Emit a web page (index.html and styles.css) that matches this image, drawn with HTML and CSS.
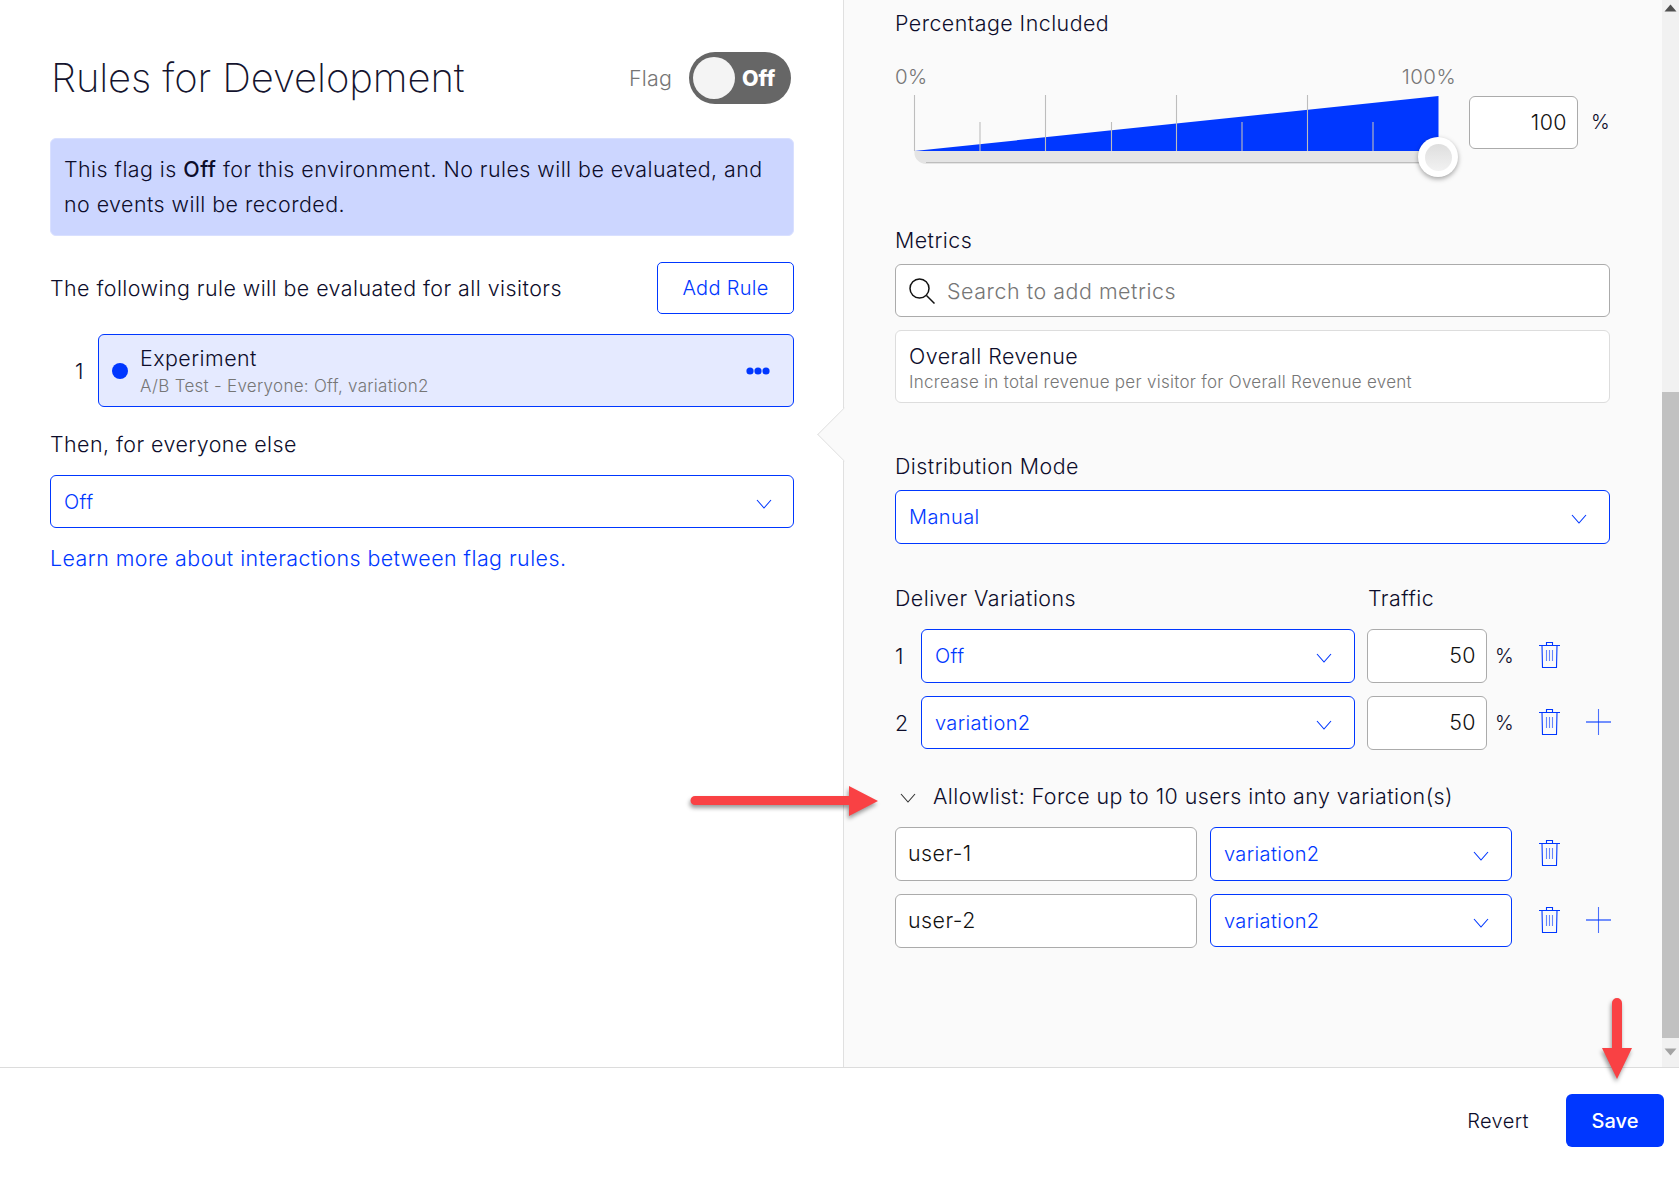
FILE: index.html
```html
<!DOCTYPE html>
<html lang="en">
<head>
<meta charset="utf-8">
<title>Rules for Development</title>
<link rel="stylesheet" href="styles.css">
</head>
<body>
<svg class="defs" width="0" height="0" aria-hidden="true">
  <symbol id="chev" viewBox="0 0 16 10"><path d="M1 1l7 8 7-8" fill="none" stroke="currentColor" stroke-width="1.1"/></symbol>
  <symbol id="trash" viewBox="0 0 21 26">
    <path d="M7.5 3V.5h6V3M0 3.5h21M3 3.5l.5 22h14l.5-22" fill="none" stroke="currentColor" stroke-width="1.1"/>
    <path d="M7.5 8v11M10.5 8v11M13.5 8v11" fill="none" stroke="currentColor" stroke-width="1.1" opacity=".6"/>
  </symbol>
  <symbol id="plus" viewBox="0 0 25 26">
    <path d="M0 13h25" stroke="currentColor" stroke-width="1.1"/>
    <path d="M12.5 0v26" stroke="currentColor" stroke-width="1.1" opacity=".7"/>
  </symbol>
</svg>
<div class="app">
  <div class="main">
    <section class="left">
      <header class="head">
        <h1 class="title">Rules for Development</h1>
        <div class="flag">
          <span class="flag-label">Flag</span>
          <div class="toggle"><span class="knob"></span><span class="toggle-text">Off</span></div>
        </div>
      </header>
      <div class="banner">This flag is <b class="strong">Off</b> for this environment. No rules will be evaluated, and no events will be recorded.</div>
      <div class="rule-head">
        <span>The following rule will be evaluated for all visitors</span>
        <button class="btn-outline">Add Rule</button>
      </div>
      <div class="rule-row">
        <span class="rule-num">1</span>
        <div class="rule-card">
          <span class="dot"></span>
          <div class="rule-body">
            <div class="rule-title">Experiment</div>
            <div class="rule-sub">A/B Test - Everyone: Off, variation2</div>
          </div>
          <svg class="more" viewBox="0 0 24 8" width="24" height="8"><circle cx="4" cy="4" r="3.6"/><circle cx="12" cy="4" r="3.6"/><circle cx="20" cy="4" r="3.6"/></svg>
        </div>
      </div>
      <div class="label then">Then, for everyone else</div>
      <div class="select select-full"><span>Off</span><svg class="chev"><use href="#chev"/></svg></div>
      <a class="link" href="#">Learn more about interactions between flag rules.</a>
    </section>

    <section class="panel">
      <div class="notch"></div>
      <div class="label first">Percentage Included</div>
      <div class="slider-row">
        <div class="slider">
          <div class="scale"><span>0%</span><span>100%</span></div>
          <svg class="ramp" width="574" height="90" viewBox="0 0 574 90">
            <path d="M19.4 59H543.5V72H31a11.6 11.6 0 0 1-11.600-11.600z" fill="#e4e4e4"/>
            <path d="M31 70.500H543" stroke="#bdbdbd" stroke-width="1" fill="none"/>
            <path d="M19.4 59L543.500 4V59z" fill="#0037ff"/>
            <g stroke="#bdbdbd" stroke-width="1.100">
              <path d="M19.500 3V59M150.500 3V59M281.500 3V59M412.500 3V59"/>
              <path d="M85 30V59M216.500 30V59M347 30V59M478 30V59"/>
            </g>
          </svg>
          <div class="thumb"><span class="thumb-in"></span></div>
        </div>
        <div class="pct-input">100</div>
        <span class="pct-sign">%</span>
      </div>

      <div class="label metrics">Metrics</div>
      <div class="search">
        <svg class="search-ico" width="26" height="26" viewBox="0 0 26 26"><circle cx="10.500" cy="10.500" r="9.500" fill="none" stroke="#111" stroke-width="1.500"/><path d="M17.500 17.500L25.500 25.500" stroke="#111" stroke-width="1.500"/></svg>
        <span>Search to add metrics</span>
      </div>
      <div class="metric">
        <div class="rule-title">Overall Revenue</div>
        <div class="rule-sub">Increase in total revenue per visitor for Overall Revenue event</div>
      </div>

      <div class="label dist">Distribution Mode</div>
      <div class="select select-panel"><span>Manual</span><svg class="chev"><use href="#chev"/></svg></div>

      <div class="var-head"><span class="var-head-name">Deliver Variations</span><span>Traffic</span></div>
      <div class="var-row first-row">
        <span class="var-num">1</span>
        <div class="select select-var"><span>Off</span><svg class="chev"><use href="#chev"/></svg></div>
        <div class="num-input">50</div>
        <span class="var-pct">%</span>
        <svg class="ico-trash"><use href="#trash"/></svg>
      </div>
      <div class="var-row next-row">
        <span class="var-num">2</span>
        <div class="select select-var"><span>variation2</span><svg class="chev"><use href="#chev"/></svg></div>
        <div class="num-input">50</div>
        <span class="var-pct">%</span>
        <svg class="ico-trash"><use href="#trash"/></svg>
        <svg class="ico-plus"><use href="#plus"/></svg>
      </div>

      <div class="allow-head"><svg class="chev chev-dark"><use href="#chev"/></svg><span>Allowlist: Force up to 10 users into any variation(s)</span></div>
      <div class="allow-row first-row">
        <div class="text-input">user-1</div>
        <div class="select select-allow"><span>variation2</span><svg class="chev"><use href="#chev"/></svg></div>
        <svg class="ico-trash allow-trash"><use href="#trash"/></svg>
      </div>
      <div class="allow-row next-row">
        <div class="text-input">user-2</div>
        <div class="select select-allow"><span>variation2</span><svg class="chev"><use href="#chev"/></svg></div>
        <svg class="ico-trash allow-trash"><use href="#trash"/></svg>
        <svg class="ico-plus"><use href="#plus"/></svg>
      </div>
    </section>

    <div class="scrollbar">
      <svg class="sb-arrow" width="17" height="17" viewBox="0 0 17 17"><path d="M2.500 11.500L8.500 4.500l6 7z" fill="#505050"/></svg>
      <div class="sb-gap"></div>
      <div class="sb-thumb"></div>
      <svg class="sb-arrow sb-arrow-down" width="17" height="17" viewBox="0 0 17 17"><path d="M2.500 5.500L8.500 12.500l6-7z" fill="#a3a3a3"/></svg>
    </div>
  </div>

  <footer class="footer">
    <button class="btn-text">Revert</button>
    <button class="btn-primary">Save</button>
  </footer>

  <svg class="arrow arrow-right" width="190" height="32" viewBox="0 0 190 32">
    <path d="M5 11H159V1L188 16 159 31V20H5a4.500 4.500 0 0 1 0-9z" fill="#f94144"/>
  </svg>
  <svg class="arrow arrow-down" width="32" height="82" viewBox="0 0 32 82">
    <path d="M11 5a5 5 0 0 1 10 0V50H31L16 81 1 50H11z" fill="#f94144"/>
  </svg>
</div>
</body>
</html>
```
FILE: styles.css
```css
* { box-sizing: border-box; }
html, body { margin: 0; height: 100%; }
body {
  font-family: Inter, "Liberation Sans", sans-serif;
  font-size: 21.4px;
  font-weight: 350;
  letter-spacing: .46px;
  line-height: 30px;
  color: #0d0d2b;
  background: #fff;
  overflow: hidden;
}
.defs { position: absolute; }
.app { position: relative; display: flex; flex-direction: column; height: 1179px; }
.main { display: flex; height: 1067px; }

/* left */
.left { width: 843px; flex: none; padding: 52px 49px 0 50px; }
.head { display: flex; justify-content: space-between; align-items: center; height: 52px; }
.title { margin: 0; font-size: 40px; font-weight: 200; letter-spacing: -.1px; line-height: 52px; padding-left: 1px; color: #14142e; }
.flag { display: flex; align-items: center; gap: 17px; margin-right: 3px; }
.flag-label { color: #767676; font-size: 21.4px; letter-spacing: .2px; }
.toggle { width: 102px; height: 52px; border-radius: 26px; background: #666; display: flex; align-items: center; padding-left: 4px; }
.knob { width: 42px; height: 42px; border-radius: 50%; background: #f4f4f4; flex: none; }
.toggle-text { color: #fff; font-weight: 800; font-size: 21.4px; letter-spacing: 0; margin-left: 7px; }
.banner { margin-top: 34px; height: 98px; padding: 13px 13px; line-height: 35px; background: #ccd6ff; border: 1px solid #d9e0ff; border-radius: 6px; }
.strong { font-weight: 500; }
.rule-head { margin-top: 26px; height: 52px; display: flex; justify-content: space-between; align-items: center; }
.btn-outline { width: 137px; height: 52px; font: inherit; font-size: 20px; letter-spacing: .3px; color: #0037ff; background: #fff; border: 1px solid #0037ff; border-radius: 5px; padding: 0; }
.rule-row { margin-top: 20px; display: flex; align-items: center; }
.rule-num { width: 48px; padding-left: 25px; flex: none; }
.rule-card { flex: 1; height: 73px; background: #e5eaff; border: 1px solid #0037ff; border-radius: 6px; display: flex; align-items: center; padding: 0 23px 0 13px; }
.dot { width: 16px; height: 16px; border-radius: 50%; background: #0037ff; flex: none; }
.rule-body { flex: 1; margin-left: 12px; }
.rule-title { line-height: 28px; }
.rule-sub { font-size: 17px; letter-spacing: .28px; line-height: 24px; color: #767676; padding-top: 2px; }
.more { fill: #0037ff; flex: none; }
.label { line-height: 30px; }
.then { margin-top: 22px; }
.select { display: flex; align-items: center; justify-content: space-between; background: #fff; border: 1px solid #0037ff; border-radius: 6px; color: #0037ff; font-size: 20px; letter-spacing: .4px; }
.chev { width: 16px; height: 10px; flex: none; color: #0037ff; margin-top: 4px; }
.select-full { margin-top: 16px; height: 53px; padding: 0 21px 0 13px; }
.link { display: block; margin-top: 15px; color: #0037ff; text-decoration: none; }

/* panel */
.panel { position: relative; flex: 1; background: #fafafa; border-left: 1px solid #e0e0e0; padding: 9px 0 0 51px; min-width: 0; }
.notch { position: absolute; left: -19px; top: 415px; width: 39px; height: 39px; background: #fafafa; border-left: 1px solid #e0e0e0; border-bottom: 1px solid #e0e0e0; transform: rotate(45deg); clip-path: polygon(0 0, 100% 100%, 0 100%); }
.first { margin-top: -1px; }
.slider-row { display: flex; margin-top: 24px; align-items: flex-start; }
.slider { position: relative; width: 574px; flex: none; }
.scale { width: 561px; display: flex; justify-content: space-between; color: #767676; font-size: 20.5px; letter-spacing: .4px; }
.ramp { display: block; }
.thumb { position: absolute; left: 523px; top: 75px; width: 40px; height: 40px; border-radius: 50%; background: #fff; box-shadow: 0 2px 5px rgba(0, 0, 0, .35); display: flex; align-items: center; justify-content: center; }
.thumb-in { width: 27px; height: 27px; border-radius: 50%; background: linear-gradient(#dedede, #f2f2f2); }
.pct-input { width: 109px; height: 53px; margin-top: 34px; background: #fff; border: 1px solid #ababab; border-radius: 6px; text-align: right; padding-right: 10px; line-height: 51px; color: #111; }
.pct-sign { margin: 45px 0 0 13px; font-size: 20px; letter-spacing: 0; }
.metrics { margin-top: 43px; }
.search { margin-top: 9px; width: 715px; height: 53px; background: #fff; border: 1px solid #ababab; border-radius: 6px; display: flex; align-items: center; padding-left: 13px; color: #767676; letter-spacing: .55px; }
.search-ico { margin-right: 12px; flex: none; }
.metric { margin-top: 13px; width: 715px; height: 73px; background: #fff; border: 1px solid #ddd; border-radius: 6px; padding: 11px 13px 0; }
.metric .rule-sub { padding-top: 0; }
.dist { margin-top: 48px; }
.select-panel { margin-top: 9px; width: 715px; height: 54px; padding: 0 22px 0 13px; }
.var-head { margin-top: 39px; display: flex; }
.var-head-name { width: 473px; }
.var-row, .allow-row { display: flex; align-items: center; height: 54px; width: 740px; }
.first-row { margin-top: 16px; }
.next-row { margin-top: 13px; }
.next-row .select { height: 53px; align-self: flex-start; }
.var-num { width: 26px; flex: none; }
.select-var { width: 434px; height: 100%; padding: 0 22px 0 13px; flex: none; }
.num-input { width: 120px; height: 54px; margin-left: 12px; flex: none; background: #fff; border: 1px solid #ababab; border-radius: 6px; text-align: right; padding-right: 10px; line-height: 50px; color: #111; }
.var-pct { width: 52px; padding-left: 8px; flex: none; font-size: 20px; letter-spacing: 0; }
.ico-trash { width: 21px; height: 26px; color: #0037ff; flex: none; margin-top: -2px; }
.ico-plus { width: 25px; height: 26px; color: #0037ff; flex: none; margin-left: 26px; margin-top: -2px; }
.allow-head { margin-top: 31px; display: flex; align-items: center; line-height: 30px; }
.chev-dark { color: #333; margin: 3px 17px 0 5px; }
.text-input { width: 302px; height: 54px; flex: none; background: #fff; border: 1px solid #ababab; border-radius: 6px; padding-left: 12px; line-height: 50px; color: #111; }
.select-allow { width: 302px; height: 54px; margin-left: 13px; flex: none; padding: 0 22px 0 13px; }
.allow-trash { margin-left: 27px; }

/* scrollbar */
.scrollbar { width: 17px; flex: none; background: #f1f1f1; display: flex; flex-direction: column; }
.sb-arrow { flex: none; display: block; }
.sb-arrow-down { margin-top: 5px; }
.sb-gap { height: 375px; flex: none; }
.sb-thumb { height: 646px; flex: none; background: #c1c1c1; }

/* footer */
.footer { height: 112px; border-top: 1px solid #dcdcdc; display: flex; justify-content: flex-end; align-items: flex-start; padding: 26px 15px 0 0; }
.btn-text { font: inherit; font-size: 20px; letter-spacing: .4px; color: #0d0d2b; background: none; border: 0; padding: 0; height: 53px; margin-right: 37px; }
.btn-primary { font: inherit; font-size: 20px; font-weight: 500; letter-spacing: .1px; width: 98px; height: 53px; color: #fff; background: #0037ff; border: 0; border-radius: 6px; padding: 0; }

/* annotation arrows */
.arrow { position: absolute; filter: drop-shadow(-1px 3px 2px rgba(0, 0, 0, .4)); }
.arrow-right { left: 690px; top: 785px; }
.arrow-down { left: 1601px; top: 998px; }
```
